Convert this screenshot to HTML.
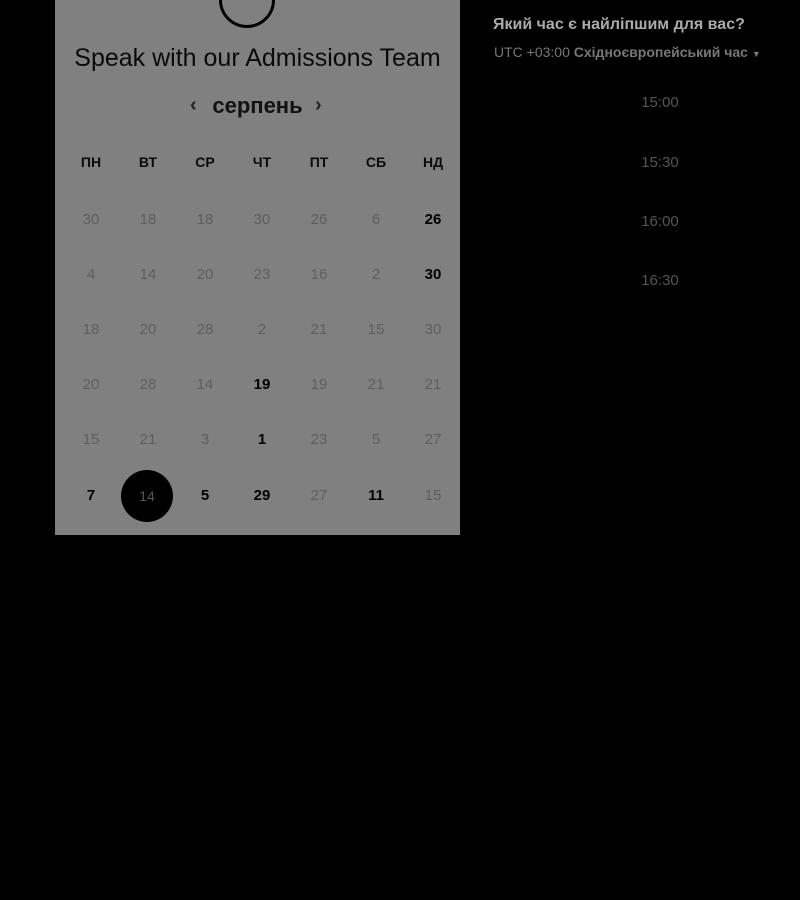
<!DOCTYPE html>
<html><head><meta charset="utf-8"><style>
body{margin:0;width:800px;height:900px;background:#000;position:relative;overflow:hidden;font-family:"Liberation Sans",sans-serif}
.panel{position:absolute;left:55px;top:0;width:405px;height:535px;background:#808080}
.logo{position:absolute;left:164px;top:-28px;width:50px;height:50px;border:3px solid #000;border-radius:50%}
.title{position:absolute;left:0;width:405px;top:44px;text-align:center;font-size:25px;color:#0a0a0a}
.month{position:absolute;left:0;width:405px;top:93px;text-align:center;font-size:22px;font-weight:bold;color:#111}
.arr{position:absolute;top:94px;font-size:20px;font-weight:bold;color:#222}
.c{position:absolute;width:50px;margin-left:-25px;text-align:center;font-size:15px;color:#5e5e5e;line-height:20px}
.h{font-weight:bold;color:#0a0a0a;font-size:14px}
.b{color:#000;font-weight:bold}
.sel{position:absolute;left:66px;top:470px;width:52px;height:52px;border-radius:50%;background:#000;color:#555;text-align:center;line-height:52px;font-size:14px}
.rt{position:absolute;color:#aaa}
.t{position:absolute;left:620px;width:80px;text-align:center;color:#555;font-size:15px}
</style></head><body>
<div class="panel">
<div class="logo"></div>
<div class="title">Speak with our Admissions Team</div>
<div class="arr" style="left:135px">‹</div>
<div class="month">серпень</div>
<div class="arr" style="left:260px">›</div>
<div id="g"></div>
<div class="sel">14</div>
</div>
<div class="rt" style="left:493px;top:16px;font-size:16px;font-weight:bold">Який час є найліпшим для вас?</div>
<div class="rt" style="left:494px;top:44px;font-size:14px;color:#777">UTC +03:00 <b>Східноєвропейський час</b> <span style="font-size:9px">▼</span></div>
<div class="t" style="top:94px">15:00</div>
<div class="t" style="top:154px">15:30</div>
<div class="t" style="top:213px">16:00</div>
<div class="t" style="top:272px">16:30</div>
<script>
var xs=[36,93,150,207,264,321,378];
var h=["ПН","ВТ","СР","ЧТ","ПТ","СБ","НД"];
var rows=[["30","18","18","30","26","6","*26"],["4","14","20","23","16","2","*30"],["18","20","28","2","21","15","30"],["20","28","14","*19","19","21","21"],["15","21","3","*1","23","5","27"],["*7","","*5","*29","27","*11","15"]];
var ys=[210,265,320,375,430,486],s="";
h.forEach(function(t,i){s+='<div class="c h" style="left:'+xs[i]+'px;top:152px">'+t+'</div>'});
rows.forEach(function(r,j){r.forEach(function(t,i){var b=t[0]=="*";s+='<div class="c'+(b?' b':'')+'" style="left:'+xs[i]+'px;top:'+ys[j]+'px">'+t.replace("*","")+'</div>'})});
document.getElementById("g").innerHTML=s;
</script>
</body></html>
